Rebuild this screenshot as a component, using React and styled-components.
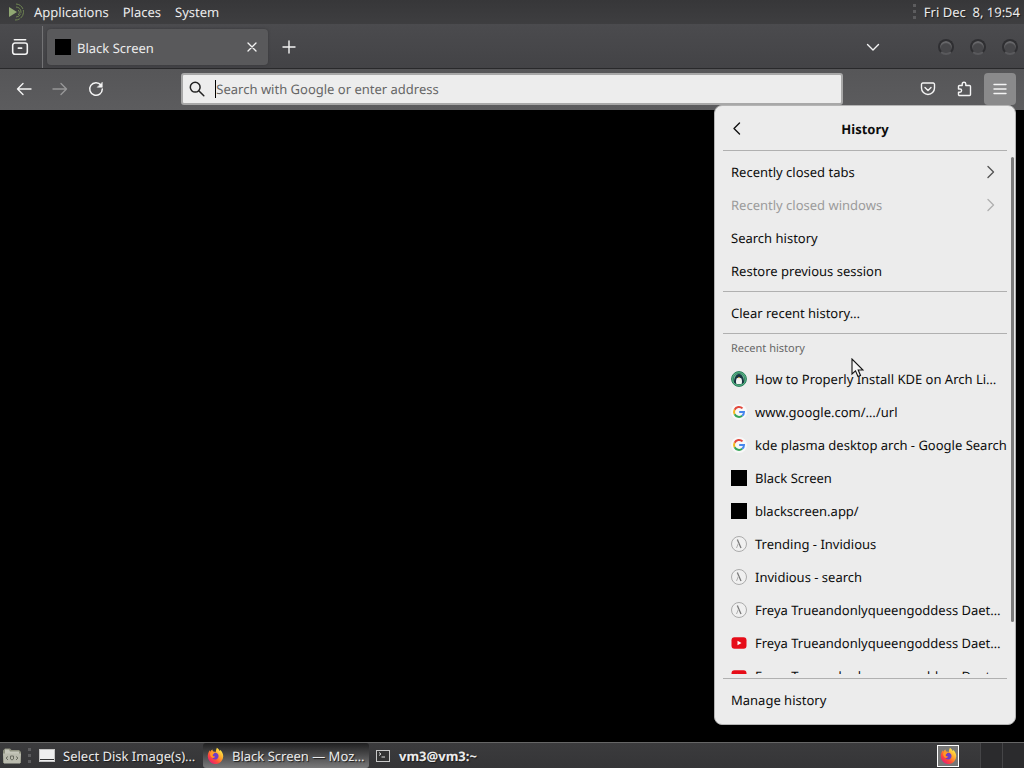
import React from "react";
import styled, { createGlobalStyle } from "styled-components";

const GlobalStyle = createGlobalStyle`
  * { box-sizing: border-box; }
  body {
    margin: 0;
    background: #000;
    font-family: "Noto Sans", "Open Sans", sans-serif;
    font-size: 13px;
    line-height: 20px;
    text-rendering: geometricPrecision;
  }
  button, input { font: inherit; color: inherit; text-rendering: inherit; }
  svg { display: block; flex: none; }
`;

const Desktop = styled.div`
  position: relative;
  display: flex;
  flex-direction: column;
  height: 100vh;
  min-height: 480px;
  overflow: hidden;
  color: #ececec;
`;

const PlainButton = styled.button`
  display: flex;
  align-items: center;
  justify-content: center;
  border: 0;
  margin: 0;
  padding: 0;
  background: none;
  white-space: nowrap;
`;

/* Top panel */
const TopPanel = styled.header`
  display: flex;
  align-items: center;
  flex: none;
  height: 24px;
  padding: 0 4px 0 8px;
  background: linear-gradient(#373739, #3e3e40);
  text-shadow: 1px 1px 1px #1c1c1c;
`;
const PanelMenus = styled.nav`
  display: flex;
  gap: 14px;
  margin-left: 7px;
  flex: 1;
`;
const Clock = styled.time`
  margin-left: 8px;
  white-space: pre;
`;
const Grip = styled.span`
  flex: none;
  width: 3px;
  height: 16px;
  background: repeating-linear-gradient(#5c5c5e 0 3px, transparent 3px 6px);
`;
const TaskGrip = styled(Grip)`
  margin-left: 6px;
`;

/* Browser window */
const TabStrip = styled.div`
  display: flex;
  align-items: center;
  flex: none;
  height: 45px;
  padding-top: 2px;
  background: linear-gradient(#4b4b4e, #434346);
  border-bottom: 1px solid #29292b;
`;
const ViewButton = styled(PlainButton)`
  align-self: stretch;
  width: 43px;
  padding-right: 3px;
  border-right: 1px solid #737375;
`;
const Tab = styled.div`
  display: flex;
  align-items: center;
  width: 221px;
  height: 36px;
  margin-left: 4px;
  padding: 0 8px;
  gap: 6px;
  border-radius: 4px;
  background: #59595b;
  box-shadow: 0 0 3px #38383a;
`;
const TabTitle = styled.span`
  flex: 1;
  padding-top: 2px;
`;
const IconButton = styled(PlainButton)`
  width: ${(p) => p.$size || 32}px;
  height: ${(p) => p.$size || 32}px;
  border-radius: 4px;
  background: ${(p) => (p.$active ? "#8a8a8b" : "none")};
  opacity: ${(p) => (p.$dim ? 0.4 : 1)};
`;
const WindowControls = styled.div`
  display: flex;
  gap: 16px;
  margin-left: 49px;
  padding-right: 6px;
`;
const WindowControl = styled.button`
  width: 16px;
  height: 16px;
  padding: 0;
  border: 2px solid #2f2f32;
  border-bottom-color: #59595c;
  border-radius: 50%;
  background: #47474a;
  box-shadow: inset 0 2px 1px #6a6a6d;
`;
const Spacer = styled.div`
  flex: 1;
`;
const Toolbar = styled.div`
  display: flex;
  align-items: center;
  flex: none;
  height: 41px;
  padding: 0 8px 2px;
  background: linear-gradient(#565658, #5c5c5e);
`;
const ToolGroup = styled.div`
  display: flex;
  justify-content: ${(p) => (p.$end ? "flex-end" : "flex-start")};
  gap: 4px;
  width: 17%;
`;
const AddressBar = styled.label`
  display: flex;
  align-items: center;
  flex: 1;
  height: 32px;
  margin: 0 2px;
  padding: 0 6px;
  border: 2px solid #a8a8a8;
  border-radius: 3px;
  background: #ededed;
  color: #222;
`;
const TextCaret = styled.span`
  width: 1px;
  height: 18px;
  margin-left: 10px;
  background: #000;
`;
const AddressInput = styled.input`
  flex: 1;
  min-width: 0;
  padding: 0;
  border: 0;
  outline: 0;
  background: none;
  &::placeholder { color: #666; opacity: 1; }
`;
const Page = styled.main`
  flex: 1;
  background: #000;
`;

/* History popup */
const Popup = styled.section`
  position: absolute;
  top: 105px;
  right: 8px;
  bottom: 43px;
  width: 302px;
  display: flex;
  flex-direction: column;
  padding-bottom: 7px;
  border: 1px solid #b4b4b4;
  border-radius: 8px;
  background: #ececec;
  color: #0c0c0c;
`;
const PopupHeader = styled.div`
  display: grid;
  grid-template-columns: 28px 1fr 28px;
  align-items: center;
  flex: none;
  height: 44px;
  padding: 2px 8px 0;
`;
const PopupTitle = styled.h1`
  margin: 0;
  font-size: 13px;
  line-height: 20px;
  font-weight: 700;
  text-align: center;
`;
const Rule = styled.hr`
  flex: none;
  height: 1px;
  margin: ${(p) => p.$margin || "3px 8px 5px"};
  border: 0;
  background: #b0b0b0;
`;
const PopupBody = styled.div`
  flex: 1;
  min-height: 0;
  padding-top: 5px;
  overflow: hidden;
`;
const ScrollThumb = styled.div`
  position: absolute;
  top: 51px;
  right: 1px;
  bottom: 102px;
  width: 3px;
  border-radius: 2px;
  background: #7b7b7b;
`;
const MenuRow = styled.button`
  display: flex;
  align-items: center;
  flex: none;
  gap: 8px;
  width: 100%;
  height: 33px;
  padding: 0 17px 2px 16px;
  border: 0;
  background: none;
  color: ${(p) => (p.disabled ? "#9b9b9b" : "#0c0c0c")};
  text-align: left;
  white-space: nowrap;
`;
const RowLabel = styled.span`
  flex: 1;
`;
const Subheader = styled.h2`
  height: 29px;
  margin: 0;
  padding: 0 16px;
  font-size: 11px;
  line-height: 29px;
  font-weight: 400;
  color: #666;
`;
const BlackIcon = styled.span`
  flex: none;
  width: 16px;
  height: 16px;
  background: #000;
`;
const Pointer = styled.svg`
  position: absolute;
  top: 358px;
  left: calc(100% - 173px);
`;

/* Bottom panel */
const Taskbar = styled.footer`
  display: flex;
  align-items: center;
  flex: none;
  height: 26px;
  padding-left: 2px;
  border-top: 1px solid #666;
  background: linear-gradient(#3b3b3d, #353537);
  text-shadow: 1px 1px 1px #1c1c1c;
`;
const TaskList = styled.div`
  display: flex;
  gap: 2px;
  margin-left: 4px;
  flex: 1;
`;
const Task = styled(PlainButton)`
  justify-content: flex-start;
  gap: 8px;
  width: 166px;
  height: 25px;
  padding-left: 4px;
  border-radius: 3px;
  font-weight: ${(p) => (p.$bold ? 700 : 400)};
  background: ${(p) => (p.$active ? "linear-gradient(#1f1f20, #7a7a7b)" : "none")};
  text-shadow: inherit;
`;
const TrayIcon = styled(PlainButton)`
  width: 22px;
  height: 22px;
  margin-right: 21px;
  border: 1px solid #fff;
  background: #777;
`;
const Workspace = styled.button`
  width: 22px;
  height: 25px;
  padding: 0;
  border: 0;
  border-left: 1px solid #454547;
  background: #2b2b2d;
`;

function Glyph({ children, size = 16, color = "#f4f4f4", width = 1.4 }) {
  return (
    <svg width={size} height={size} viewBox="0 0 16 16" fill="none" stroke={color}
      strokeWidth={width} strokeLinecap="round" strokeLinejoin="round" aria-hidden="true">
      {children}
    </svg>
  );
}

function MateLogo() {
  return (
    <svg width="19" height="20" viewBox="0 0 19 20" fill="none" aria-hidden="true">
      <path d="M1 5 9 10 1 15Z" fill="#91a873" />
      <path d="M8 2a8 8 0 1 1-1 16M8 5a5 5 0 1 1 0 10" stroke="#6f8552" strokeWidth="1" strokeDasharray="9 1" />
      <path d="M10 8a3 3 0 0 1 0 5" stroke="#6f8552" />
    </svg>
  );
}

function FirefoxLogo({ id }) {
  return (
    <svg width="17" height="17" viewBox="0 0 18 18" aria-hidden="true">
      <defs>
        <linearGradient id={id} x1="0.85" y1="0.1" x2="0.2" y2="0.9">
          <stop offset="0" stopColor="#fff04a" />
          <stop offset="0.4" stopColor="#ffa22b" />
          <stop offset="0.7" stopColor="#ff5135" />
          <stop offset="1" stopColor="#e92070" />
        </linearGradient>
      </defs>
      <path fill={`url(#${id})`} d="M10.5 0.8c2 1.2 2.3 2.7 3.2 3.5.2-.5.1-1 0-1.4 2.2 1.7 3.5 4.1 3.5 7A8.2 8.2 0 0 1 .8 9.900c0-2.500.8-4.700 2.300-6.500 0 .7.1 1.200.4 1.600C4.200 3.900 4.900 3.200 6 2.700c-.2.800 0 1.600.5 2.100 1.200 0 1.900.3 2.500.8.7-1.500.5-3.200 1.500-4.800Z" />
      <path fill="#6e3dc6" d="M6.200 7.100c1.600-1.400 4-1.100 5.300.4 1.300 1.700.8 4.200-.9 5.200-2 1.200-4.500.4-5.200-1.500 1.100.7 2 .3 2.800-.4.600-.5.200-.8-.6-.8-1.200 0-1.900-1-1.400-2.900Z" />
      <path fill="#ff9b24" d="M4 5.600c1.200-.7 2.700-.6 4 .5L6.600 7.800C5.900 8 5.500 8.500 5.900 9.300c.4.700 1.300.8 2.300.9-.8 1.200-2 1.500-3.100 1C3.200 9.700 3 7.400 4 5.600Z" />
    </svg>
  );
}

function GoogleIcon() {
  return (
    <svg width="16" height="16" viewBox="0 0 16 16" fill="none" strokeWidth="2" aria-hidden="true">
      <circle cx="8" cy="8" r="8" fill="#f8f8f8" />
      <path d="M11.5 4.400A5 5 0 0 0 3.600 5.700" stroke="#e2483c" />
      <path d="M3.600 5.700a5 5 0 0 0 0 4.600" stroke="#f3b91d" />
      <path d="M3.600 10.300a5 5 0 0 0 7.600 1.500" stroke="#37a659" />
      <path d="M8.200 8H13a5 5 0 0 1-1.800 3.800" stroke="#4686ed" />
    </svg>
  );
}

function TuxIcon() {
  return (
    <svg width="16" height="16" viewBox="0 0 16 16" aria-hidden="true">
      <circle cx="8" cy="8" r="7.4" fill="#57b985" stroke="#28795a" strokeWidth="1" />
      <circle cx="8" cy="8" r="5.6" fill="#75c7a1" stroke="#24594b" strokeWidth="0.6" />
      <path d="M3 11.500c0-2 .3-3.800 1.200-5.500C5 4 6.300 3 8 3s3 1 3.800 3c.9 1.700 1.200 3.500 1.200 5.500L11 13H5Z" fill="#173340" />
      <path d="M5.500 13C4.600 11 5 8.800 5.600 7.500c.6-1 4.200-1 4.800 0 .6 1.300 1 3.500.1 5.500Z" fill="#f2f4f2" />
      <path d="m7 6.600 1-.6 1 .6-1 .9Z" fill="#f0b438" />
    </svg>
  );
}

function InvidiousIcon() {
  return (
    <svg width="16" height="16" viewBox="0 0 16 16" fill="none" aria-hidden="true">
      <circle cx="8" cy="8" r="7.5" fill="#f0f0f0" stroke="#ababab" />
      <path d="m6.500 4 3.500 8" stroke="#777" strokeWidth="1.300" />
      <path d="m7.500 7-2 5" stroke="#b0b0b0" />
      <circle cx="6.5" cy="4" r="0.7" fill="#888" />
    </svg>
  );
}

function YouTubeIcon() {
  return (
    <svg width="16" height="16" viewBox="0 0 16 16" aria-hidden="true">
      <rect x="0.5" y="2.3" width="15" height="11.4" rx="3" fill="#e60c18" />
      <path d="m6.500 5.800 4 2.200-4 2.200Z" fill="#fff" />
    </svg>
  );
}

const history = [
  ["tux", "How to Properly Install KDE on Arch Li…"],
  ["google", "www.google.com/…/url"],
  ["google", "kde plasma desktop arch - Google Search"],
  ["black", "Black Screen"],
  ["black", "blackscreen.app/"],
  ["invidious", "Trending - Invidious"],
  ["invidious", "Invidious - search"],
  ["invidious", "Freya Trueandonlyqueengoddess Daet…"],
  ["youtube", "Freya Trueandonlyqueengoddess Daet…"],
  ["youtube", "Freya Trueandonlyqueengoddess Daet…"],
];
const siteIcons = {
  tux: TuxIcon,
  google: GoogleIcon,
  black: BlackIcon,
  invidious: InvidiousIcon,
  youtube: YouTubeIcon,
};

function RowArrow({ dim }) {
  return <Glyph color={dim ? "#b0b0b0" : "#555"}><path d="m6 2.500 5.500 5.500L6 13.500" /></Glyph>;
}

function HistoryPopup() {
  return (
    <Popup>
      <PopupHeader>
        <IconButton $size={28} aria-label="Back">
          <Glyph color="#111"><path d="M10.500 2 5 7.500l5.500 5.500" /></Glyph>
        </IconButton>
        <PopupTitle>History</PopupTitle>
      </PopupHeader>
      <Rule $margin="0 8px" />
      <PopupBody>
        <MenuRow><RowLabel>Recently closed tabs</RowLabel><RowArrow /></MenuRow>
        <MenuRow disabled><RowLabel>Recently closed windows</RowLabel><RowArrow dim /></MenuRow>
        <MenuRow>Search history</MenuRow>
        <MenuRow>Restore previous session</MenuRow>
        <Rule />
        <MenuRow>Clear recent history…</MenuRow>
        <Rule $margin="3px 8px 0" />
        <Subheader>Recent history</Subheader>
        {history.map(([icon, title], i) => {
          const Icon = siteIcons[icon];
          return <MenuRow key={i}><Icon />{title}</MenuRow>;
        })}
      </PopupBody>
      <ScrollThumb />
      <Rule $margin="4px 8px 5px" />
      <MenuRow>Manage history</MenuRow>
    </Popup>
  );
}

export default function App() {
  return (
    <Desktop>
      <GlobalStyle />
      <TopPanel>
        <MateLogo />
        <PanelMenus>
          <PlainButton>Applications</PlainButton>
          <PlainButton>Places</PlainButton>
          <PlainButton>System</PlainButton>
        </PanelMenus>
        <Grip />
        <Clock>{"Fri Dec  8, 19:54"}</Clock>
      </TopPanel>
      <TabStrip>
        <ViewButton aria-label="Firefox View">
          <Glyph size={18}>
            <path d="M3 1.500h10M1.500 6.500a2 2 0 0 1 2-2h9a2 2 0 0 1 2 2v6a2 2 0 0 1-2 2h-9a2 2 0 0 1-2-2zM6.500 9h3" />
          </Glyph>
        </ViewButton>
        <Tab>
          <BlackIcon />
          <TabTitle>Black Screen</TabTitle>
          <IconButton $size={16} aria-label="Close tab">
            <Glyph width={1.3}><path d="m4 4 8 8M12 4l-8 8" /></Glyph>
          </IconButton>
        </Tab>
        <IconButton $size={42} aria-label="New tab">
          <Glyph><path d="M8 2v12M2 8h12" /></Glyph>
        </IconButton>
        <Spacer />
        <IconButton aria-label="List all tabs">
          <Glyph><path d="m2.500 5.500 5.500 5.500 5.500-5.500" /></Glyph>
        </IconButton>
        <WindowControls>
          <WindowControl aria-label="Minimize" />
          <WindowControl aria-label="Maximize" />
          <WindowControl aria-label="Close" />
        </WindowControls>
      </TabStrip>
      <Toolbar>
        <ToolGroup>
          <IconButton aria-label="Go back">
            <Glyph><path d="M15 8H1.500M7 2.500 1.500 8 7 13.500" /></Glyph>
          </IconButton>
          <IconButton $dim aria-label="Go forward">
            <Glyph><path d="M1 8h13.500M9 2.500 14.500 8 9 13.500" /></Glyph>
          </IconButton>
          <IconButton aria-label="Reload">
            <Glyph width={1.5}>
              <path d="M13 4.200A6.300 6.300 0 1 0 14.300 8" />
              <path d="M14.300 1.500v4.800H9.500Z" fill="#f4f4f4" strokeWidth="0.5" />
            </Glyph>
          </IconButton>
        </ToolGroup>
        <AddressBar>
          <Glyph color="#222" width={1.5}><circle cx="6.2" cy="6.2" r="4.9" /><path d="m10 10 4.800 4.800" /></Glyph>
          <TextCaret />
          <AddressInput aria-label="Address" placeholder="Search with Google or enter address" />
        </AddressBar>
        <ToolGroup $end>
          <IconButton aria-label="Save to Pocket">
            <Glyph><path d="M2.800 2h10.400a1.300 1.300 0 0 1 1.300 1.300V7a6.500 6.500 0 0 1-13 0V3.300A1.300 1.300 0 0 1 2.800 2ZM5 6.500l3 3 3-3" /></Glyph>
          </IconButton>
          <IconButton aria-label="Extensions">
            <Glyph><path d="M2.500 5.500a1 1 0 0 1 1-1h2.700V3a1.800 1.800 0 0 1 3.600 0v1.500h3.700a1 1 0 0 1 1 1v8a1 1 0 0 1-1 1h-10a1 1 0 0 1-1-1v-2.300H4a1.600 1.600 0 0 0 0-3.200H2.500Z" /></Glyph>
          </IconButton>
          <IconButton $active aria-label="Open application menu">
            <Glyph><path d="M2 3.500h12M2 8h12M2 12.500h12" /></Glyph>
          </IconButton>
        </ToolGroup>
      </Toolbar>
      <Page />
      <Taskbar>
        <PlainButton aria-label="Files">
          <svg width="20" height="20" viewBox="0 0 20 20" aria-hidden="true">
            <path d="M1 4.500 3 2.500h5l1.500 1.500H17l2 2V17H1Z" fill="#8f9180" />
            <path d="M3 3.500h4l1 2h9v3H3Z" fill="#c6c7bb" />
            <path d="M1 7.500h18L18 17.500H2Z" fill="#babbae" />
            <path d="M6 10.500 4 12l2 2M14 10.500l2 1.500-2 2M8.500 10h3v3l-1.500 1-1.500-1Z" stroke="#696b60" fill="none" />
          </svg>
        </PlainButton>
        <TaskGrip />
        <TaskList>
          <Task>
            <svg width="16" height="16" viewBox="0 0 16 16" aria-hidden="true">
              <rect x="0.5" y="1.5" width="15" height="12" fill="#eee" stroke="#c5c5c5" />
              <path d="M1 11.500h14" stroke="#333" />
            </svg>
            Select Disk Image(s)…
          </Task>
          <Task $active>
            <FirefoxLogo id="fx-task" />
            Black Screen — Moz…
          </Task>
          <Task $bold>
            <svg width="16" height="16" viewBox="0 0 16 16" aria-hidden="true">
              <rect x="1.5" y="2.5" width="13" height="11" fill="#333" stroke="#c8c8c8" />
              <path d="m4 4.500 2 1.500-2 1.500M6.500 9H10" stroke="#ddd" fill="none" />
            </svg>
            vm3@vm3:~
          </Task>
        </TaskList>
        <TrayIcon aria-label="Firefox"><FirefoxLogo id="fx-tray" /></TrayIcon>
        <Workspace aria-label="Workspace 1" />
        <Workspace aria-label="Workspace 2" />
      </Taskbar>
      <HistoryPopup />
      <Pointer width="13" height="20" viewBox="0 0 13 20" aria-hidden="true">
        <path d="M1 1v15l3.500-3.200L7 18.500l2.500-1L7.200 12H12Z" fill="#f5f5f5" stroke="#111" strokeWidth="1.1" />
      </Pointer>
    </Desktop>
  );
}
